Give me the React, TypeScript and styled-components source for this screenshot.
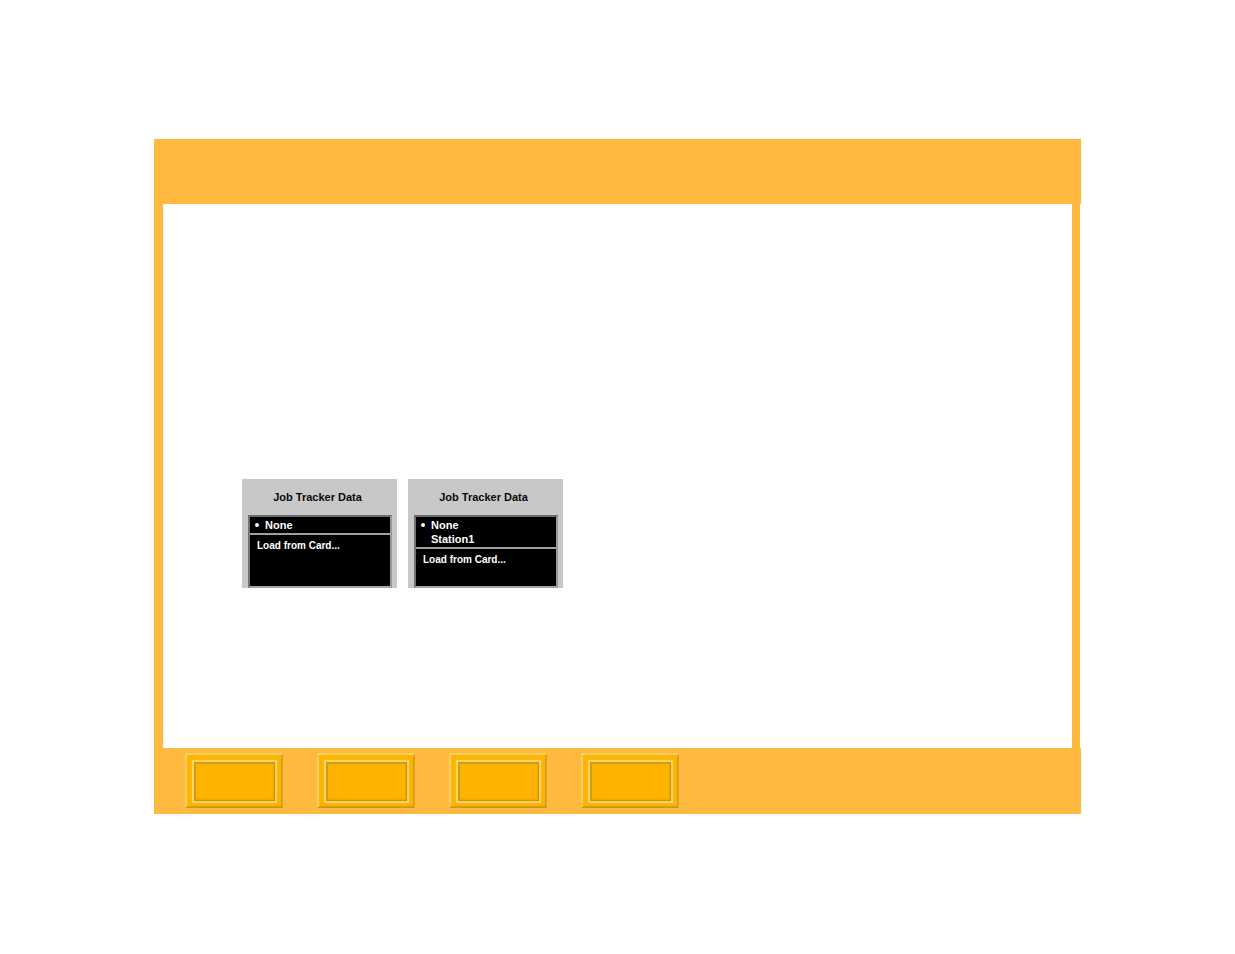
import React from "react";
import styled, { createGlobalStyle } from "styled-components";

const GlobalStyle = createGlobalStyle`
  *, *::before, *::after { box-sizing: border-box; }
  body {
    margin: 0;
    background: #ffffff;
    font-family: "Liberation Sans", Arial, Helvetica, sans-serif;
  }
`;

const Page = styled.div`
  padding: 139px 154px;
`;

const Header = styled.header`
  height: 65px;
  background: #ffb93e;
`;

const Content = styled.main`
  display: flex;
  align-items: flex-start;
  gap: 11px;
  min-height: 544px;
  margin-right: 1px;
  padding: 275px 79px 0;
  border: solid #ffb93e;
  border-width: 0 8px 0 9px;
`;

const Footer = styled.footer`
  display: flex;
  align-items: flex-start;
  gap: 34px;
  min-height: 66px;
  padding: 5px 31px;
  background: #ffb93e;
`;

const NavButton = styled.button`
  display: flex;
  width: 98px;
  height: 55px;
  padding: 6px 5px 4px 6px;
  border: 1px solid;
  border-color: #f8d36c #d9a42a #c4962a #ecd070;
  background: #ffb200;
  box-shadow: inset 1px 1px 1px #f6d25c, inset -1px -1px 1px #dc9f10;
  cursor: pointer;
`;

const NavInset = styled.span`
  flex: 1;
  border: 2px solid #f2d468;
  box-shadow: 0 0 1px #f8cc50, inset 2px 2px 1px #d09c10,
    inset -1px -1px 2px #c08c08;
`;

const Panel = styled.section`
  width: 155px;
  min-height: 109px;
  padding: 10px 5px 0 6px;
  background: #c8c8c8;
`;

const PanelTitle = styled.h2`
  margin: 0 0 10px;
  padding-right: 5px;
  font-size: 11px;
  line-height: 16px;
  font-weight: bold;
  text-align: center;
  color: #0a0a0a;
`;

const List = styled.div`
  display: flex;
  flex-direction: column;
  height: 73px;
  border: 2px solid;
  border-color: #6a6a6a #9a9a9a #a4a4a4 #747474;
  background: #000000;
  color: #ffffff;
  font-size: 11px;
  font-weight: bold;
`;

const Options = styled.fieldset`
  margin: 0;
  padding: 1px 0;
  border: 0;
  border-bottom: 2px solid #a0a0a0;
`;

const Option = styled.label`
  display: flex;
  align-items: center;
  gap: 6px;
  height: 14px;
  padding-left: 5px;
  line-height: 14px;
`;

const Radio = styled.input`
  appearance: none;
  width: 4px;
  height: 4px;
  margin: 0;
  border-radius: 50%;
  &:checked { background: #ffffff; }
`;

const LoadButton = styled.button`
  padding: 4px 7px;
  border: 0;
  background: transparent;
  color: inherit;
  font: inherit;
  font-size: 10px;
  line-height: 14px;
  text-align: left;
  cursor: pointer;
`;

function TrackerPanel({ id, options }: { id: string; options: string[] }) {
  return (
    <Panel aria-labelledby={id}>
      <PanelTitle id={id}>Job Tracker Data</PanelTitle>
      <List>
        <Options aria-labelledby={id}>
          {options.map((option, i) => (
            <Option key={option}>
              <Radio type="radio" name={id} defaultChecked={i === 0} />
              {option}
            </Option>
          ))}
        </Options>
        <LoadButton type="button">Load from Card...</LoadButton>
      </List>
    </Panel>
  );
}

export default function App() {
  return (
    <>
      <GlobalStyle />
      <Page>
        <Header />
        <Content>
          <TrackerPanel id="tracker-empty" options={["None"]} />
          <TrackerPanel id="tracker-station" options={["None", "Station1"]} />
        </Content>
        <Footer>
          {[1, 2, 3, 4].map((n) => (
            <NavButton key={n} type="button">
              <NavInset />
            </NavButton>
          ))}
        </Footer>
      </Page>
    </>
  );
}
